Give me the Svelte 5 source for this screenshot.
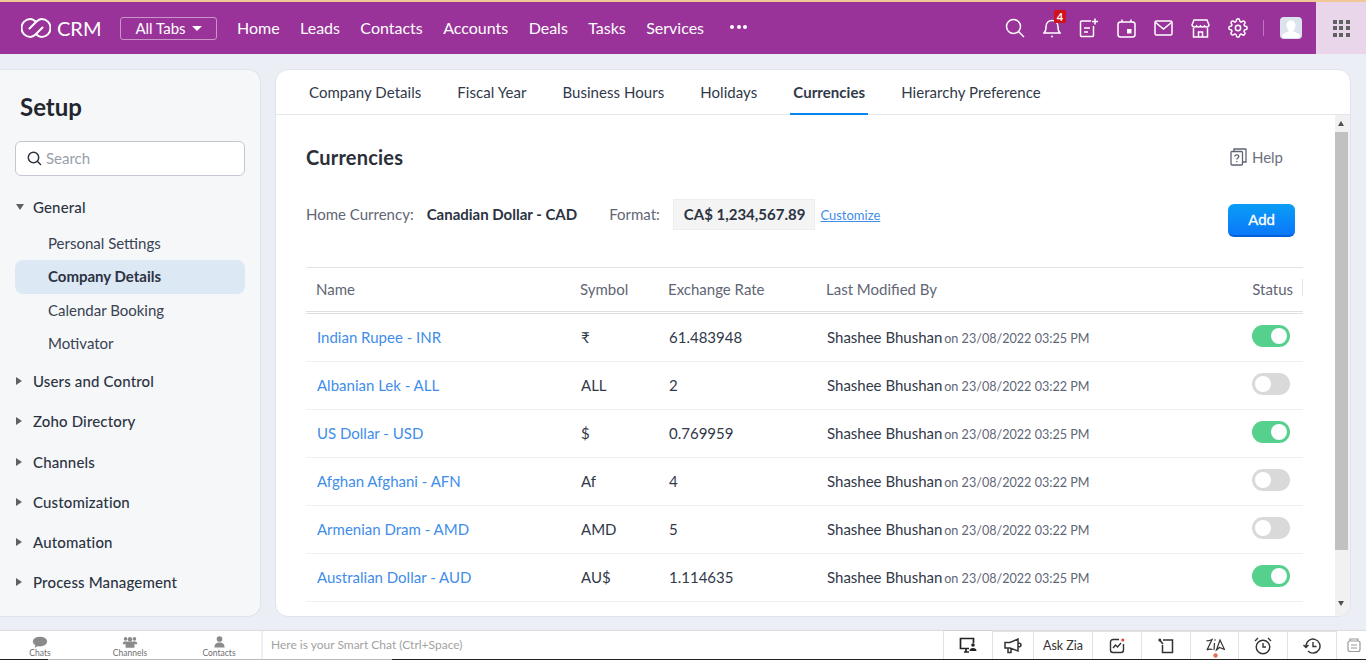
<script>
	const nav = ['Home', 'Leads', 'Contacts', 'Accounts', 'Deals', 'Tasks', 'Services'];
	const tabs = ['Company Details', 'Fiscal Year', 'Business Hours', 'Holidays', 'Currencies', 'Hierarchy Preference'];
	const groups = ['Users and Control', 'Zoho Directory', 'Channels', 'Customization', 'Automation', 'Process Management'];
	const general = ['Personal Settings', 'Company Details', 'Calendar Booking', 'Motivator'];
	const rows = [
		{ name: 'Indian Rupee - INR', symbol: '₹', rate: '61.483948', time: '03:25 PM', on: true },
		{ name: 'Albanian Lek - ALL', symbol: 'ALL', rate: '2', time: '03:22 PM', on: false },
		{ name: 'US Dollar - USD', symbol: '$', rate: '0.769959', time: '03:25 PM', on: true },
		{ name: 'Afghan Afghani - AFN', symbol: 'Af', rate: '4', time: '03:22 PM', on: false },
		{ name: 'Armenian Dram - AMD', symbol: 'AMD', rate: '5', time: '03:22 PM', on: false },
		{ name: 'Australian Dollar - AUD', symbol: 'AU$', rate: '1.114635', time: '03:25 PM', on: true }
	];
</script>

<div class="page">
	<header class="top">
		<svg class="logo" width="30" height="20" viewBox="0 0 30 20" fill="none" stroke="#fff" stroke-width="2" stroke-linecap="round">
			<path d="M14.500 3.500C13 2 11.500 1 9.500 1A9 9 0 0 0 9.500 19C12 19 13.500 17.500 15 16L21.500 9.500" />
			<path d="M15.500 16.500C17 18 18.500 19 20.500 19A9 9 0 0 0 20.500 1C18 1 16.500 2.500 15 4L8.500 10.500" />
		</svg>
		<span class="brand">CRM</span>
		<button class="alltabs">All Tabs <i class="caret"></i></button>
		<nav class="nav">
			{#each nav as item}
				<span>{item}</span>
			{/each}
			<span class="dots"><i></i><i></i><i></i></span>
		</nav>
		<div class="tools">
			<svg width="20" height="20" viewBox="0 0 20 20" fill="none" stroke="#fff" stroke-width="1.500"><circle cx="8.500" cy="8.500" r="7" /><path d="M13.500 13.500L19 19" /></svg>
			<span class="bell">
				<svg width="18" height="20" viewBox="0 0 18 20" fill="none" stroke="#fff" stroke-width="1.500"><path d="M1 15c2-1.500 2-3 2-6 0-4 2.500-6.500 6-6.500s6 2.500 6 6.500c0 3 0 4.500 2 6z" /><circle cx="9" cy="18.500" r="1" fill="#fff" stroke="none" /></svg>
				<b>4</b>
			</span>
			<svg width="20" height="20" viewBox="0 0 20 20" fill="none" stroke="#fff" stroke-width="1.500"><path d="M12 3H2.500a1 1 0 0 0-1 1v13.500a1 1 0 0 0 1 1h11a1 1 0 0 0 1-1V8" /><path d="M5 10h6M5 14h4M16 0.500v6M13 3.500h6" /></svg>
			<svg width="19" height="19" viewBox="0 0 19 19" fill="none" stroke="#fff" stroke-width="1.500"><rect x="1" y="3" width="17" height="15" rx="2.500" /><path d="M5 0.500V3M14 0.500V3" /><rect x="10" y="10" width="4.500" height="4.500" fill="#fff" stroke="none" /></svg>
			<svg width="19" height="16" viewBox="0 0 19 16" fill="none" stroke="#fff" stroke-width="1.500"><rect x="1" y="1" width="17" height="14" rx="1.500" /><path d="M1 2l8.500 7L18 2" /></svg>
			<svg width="19" height="19" viewBox="0 0 19 19" fill="none" stroke="#fff" stroke-width="1.500"><path d="M3 1h13l2 5a2.500 2.500 0 0 1-4.500 1 2.500 2.500 0 0 1-4 0 2.500 2.500 0 0 1-4 0A2.500 2.500 0 0 1 1 6z" /><path d="M2.500 9v9h14V9" /><path d="M7.500 18v-5h4v5" /></svg>
			<svg width="20" height="20" viewBox="0 0 24 24" fill="none" stroke="#fff" stroke-width="1.800"><circle cx="12" cy="12" r="3.200" /><path d="M19.400 15a1.700 1.700 0 0 0 .3 1.800l.1.100a2 2 0 1 1-2.900 2.900l-.1-.1a1.700 1.700 0 0 0-2.800 1.200V21a2 2 0 1 1-4 0v-.1a1.700 1.700 0 0 0-2.800-1.200l-.1.100a2 2 0 1 1-2.900-2.900l.1-.1a1.700 1.700 0 0 0-1.200-2.800H3a2 2 0 1 1 0-4h.1a1.700 1.700 0 0 0 1.200-2.800l-.1-.1a2 2 0 1 1 2.900-2.900l.1.100a1.700 1.700 0 0 0 2.800-1.200V3a2 2 0 1 1 4 0v.1a1.700 1.700 0 0 0 2.800 1.200l.1-.1a2 2 0 1 1 2.900 2.900l-.1.100a1.700 1.700 0 0 0 1.200 2.800h.1a2 2 0 1 1 0 4h-.1a1.700 1.700 0 0 0-1.500 1z" /></svg>
			<i class="sep"></i>
			<span class="avatar">
				<svg width="22" height="22" viewBox="0 0 22 22"><rect width="22" height="22" rx="4" fill="#dde3ec" /><path d="M11 3.500c3 0 4.500 2.300 4.500 5 0 2-1 3.800-2 4.800v1.200c2.500 1 5.500 1.500 6.500 4 0 1.500-1 2.500-2.500 2.500h-13C3 20.500 2 19.500 2 18.500c1-2.500 4-3 6.500-4v-1.200c-1-1-2-2.800-2-4.800 0-2.700 1.500-5 4.500-5z" fill="#fff" /></svg>
			</span>
		</div>
		<div class="apps">
			<div class="grid9">
				{#each Array(9) as _}<i></i>{/each}
			</div>
		</div>
	</header>

	<main class="main">
		<aside class="side">
			<h1>Setup</h1>
			<div class="search">
				<svg width="15" height="15" viewBox="0 0 15 15" fill="none" stroke="#2f3441" stroke-width="1.500"><circle cx="6.500" cy="6.500" r="5.200" /><path d="M10.300 10.300L14 14" /></svg>
				<span>Search</span>
			</div>
			<div class="group open"><i class="tri down"></i>General</div>
			<ul>
				{#each general as item}
					<li class:active={item === 'Company Details'}>{item}</li>
				{/each}
			</ul>
			{#each groups as g}
				<div class="group"><i class="tri"></i>{g}</div>
			{/each}
		</aside>

		<section class="content">
			<div class="tabs">
				{#each tabs as t}
					<span class="tab" class:current={t === 'Currencies'}>{t}</span>
				{/each}
			</div>
			<div class="body">
				<div class="pane">
					<div class="title">
						<h2>Currencies</h2>
						<span class="help">
							<svg width="17" height="18" viewBox="0 0 17 18" fill="none" stroke="#5f6472" stroke-width="1.300"><rect x="1" y="3.500" width="11.500" height="13.500" rx="1" /><path d="M4 3.500V1h11.500a.5.5 0 0 1 .5.500V14h-3.500" /><path d="M4.800 8.500c0-2.300 4-2.300 4 0 0 1.500-2 1.500-2 3M6.800 13v1.300" /></svg>
							Help
						</span>
					</div>
					<div class="home">
						<span class="lbl">Home Currency:</span>
						<b class="cad">Canadian Dollar - CAD</b>
						<span class="lbl fmt">Format:</span>
						<b class="sample">CA$ 1,234,567.89</b>
						<a href="#top" class="custom">Customize</a>
						<button class="add">Add</button>
					</div>
					<div class="table">
						<div class="row head">
							<span class="n">Name</span>
							<span>Symbol</span>
							<span>Exchange Rate</span>
							<span>Last Modified By</span>
							<span class="st">Status</span>
						</div>
						{#each rows as r}
							<div class="row">
								<span class="n link">{r.name}</span>
								<span>{r.symbol}</span>
								<span>{r.rate}</span>
								<span>Shashee Bhushan <small>on 23/08/2022 {r.time}</small></span>
								<span class="st"><i class="toggle" class:on={r.on}></i></span>
							</div>
						{/each}
					</div>
				</div>
				<div class="scroll">
					<i class="up"></i>
					<div class="thumb"></div>
					<i class="dn"></i>
				</div>
			</div>
		</section>
	</main>

	<footer class="foot">
		<div class="chatlinks">
			<span class="fl">
				<svg width="16" height="12" viewBox="0 0 18 13" fill="#8a8a8a"><ellipse cx="9" cy="6" rx="8" ry="5.500" /><path d="M4 9l-1 4 5-2.500z" /></svg>
				Chats
			</span>
			<span class="fl">
				<svg width="16" height="12" viewBox="0 0 18 13" fill="#8a8a8a"><circle cx="4" cy="3" r="2" /><circle cx="14" cy="3" r="2" /><circle cx="9" cy="3.500" r="2.500" /><path d="M1 7.500c0-1 2-1.500 3-1.500h10c1 0 3 .5 3 1.500V9H1zM4 10c0-2 2-3 5-3s5 1 5 3v3H4z" /></svg>
				Channels
			</span>
			<span class="fl">
				<svg width="13" height="12" viewBox="0 0 14 14" fill="#8a8a8a"><circle cx="7" cy="3.500" r="3.300" /><path d="M1 13.500c0-4 2-6 6-6s6 2 6 6z" /></svg>
				Contacts
			</span>
		</div>
		<div class="smart">Here is your Smart Chat (Ctrl+Space)</div>
		<div class="dock">
			<span class="cell first">
				<svg width="18" height="16" viewBox="0 0 18 16" fill="none" stroke="#222" stroke-width="1.700"><path d="M10 11.500H1.500V1.500h13V6M5 15h5M7 12v3" /><circle cx="14" cy="8" r="1.800" fill="#222" stroke="none" /><path d="M10.500 14c0-2 1.500-3 3.500-3s3.500 1 3.500 3z" fill="#222" stroke="none" /></svg>
			</span>
			<span class="cell c41">
				<svg width="18" height="16" viewBox="0 0 18 16" fill="none" stroke="#333" stroke-width="1.500"><path d="M1 4.500h5l8-3.500v12L6 10H1zM4 10v4.500h3V10M14 5c2 0 3 1 3 2s-1 2-3 2" /></svg>
			</span>
			<span class="cell zia">Ask Zia</span>
			<span class="cell">
				<svg width="16" height="16" viewBox="0 0 16 16" fill="none" stroke="#333" stroke-width="1.400"><path d="M10 1.500H4A2.500 2.500 0 0 0 1.500 4v8A2.500 2.500 0 0 0 4 14.500h8a2.500 2.500 0 0 0 2.500-2.500V6" /><path d="M4 10l2.500-3 2 2L12 5" /><circle cx="13.800" cy="2" r="1.500" fill="#e23b2e" stroke="none" /></svg>
			</span>
			<span class="cell">
				<svg width="16" height="16" viewBox="0 0 16 16" fill="none" stroke="#333" stroke-width="1.500"><path d="M5 2h9.500v12.500h-10V7" /><path d="M1.500 2L5 6" /><circle cx="1.800" cy="2" r="1.500" fill="#333" stroke="none" /></svg>
			</span>
			<span class="cell c48">
				<svg class="zlogo" width="20" height="20" viewBox="0 0 20 20" fill="none" stroke="#333" stroke-width="1.200"><path d="M1.500 2.500C3 3.500 5 2.500 7 1.500L2 12c2-1.500 4-1 5.500-.5" /><path d="M9.500 5l-.5 7" /><circle cx="10" cy="2" r=".8" fill="#333" stroke="none" /><path d="M15 2l4.500 9.500-5-2-3 2.500z" /><circle cx="10.500" cy="17.500" r="2.200" fill="#e0705a" stroke="none" /></svg>
			</span>
			<span class="cell">
				<svg width="18" height="18" viewBox="0 0 18 18" fill="none" stroke="#333" stroke-width="1.400"><circle cx="9" cy="10" r="6.800" /><path d="M9 6v4h3M1 4l3-3M17 4l-3-3" /></svg>
			</span>
			<span class="cell">
				<svg width="18" height="16" viewBox="0 0 18 16" fill="none" stroke="#333" stroke-width="1.400"><path d="M3 8a7 7 0 1 1 2 5M10 4v4.500h3.500M0.500 7L3 9.500 5.500 7" /></svg>
			</span>
			<span class="cell last">
				<svg width="14" height="14" viewBox="0 0 14 14" fill="none" stroke="#999" stroke-width="1.200"><rect x="1" y="3" width="12" height="10.500" rx="2" /><path d="M3 3V1h8v2M4 7h6M4 10h6" /></svg>
			</span>
		</div>
	</footer>
</div>

<style>
	:global(body) {
		margin: 0;
		font-family: Lato, 'Liberation Sans', sans-serif;
		color: #313949;
	}

	.page {
		width: 1366px;
		height: 660px;
		background: #ebeef4;
		display: flex;
		flex-direction: column;
		overflow: hidden;
	}

	i { display: block; }

	.top {
		height: 54px;
		box-sizing: border-box;
		flex: none;
		border-top: 2px solid #f0c896;
		background: #993399;
		display: flex;
		align-items: center;
		color: #fff;
		padding-left: 21px;
	}
	.brand { font-size: 20px; margin-left: 6px; width: 44px; margin-right: 19px; }
	.alltabs {
		width: 97px;
		height: 23px;
		border: 1px solid #c995c9;
		border-radius: 3px;
		background: transparent;
		color: #fff;
		font: 15px Lato, sans-serif;
		display: flex;
		align-items: center;
		justify-content: center;
		gap: 6px;
		padding: 0;
	}
	.caret {
		border: 5.500px solid transparent;
		border-top-color: #fff;
		border-bottom: 0;
	}
	.nav {
		display: flex;
		align-items: center;
		gap: 20.400px;
		margin-left: 20px;
		margin-bottom: 2px;
		font-size: 16px;
	}
	.dots { display: flex; gap: 2.500px; margin-left: 6px; }
	.dots i { width: 4px; height: 4px; border-radius: 50%; background: #fff; }

	.tools {
		margin-left: auto;
		display: flex;
		align-items: center;
		gap: 18px;
		margin-right: 14px;
	}
	.bell { position: relative; display: flex; }
	.bell b {
		position: absolute;
		top: -8px;
		right: -5px;
		width: 12px;
		height: 13px;
		background: #d0121b;
		font-size: 11px;
		line-height: 13px;
		text-align: center;
		border-radius: 1px;
	}
	.sep { width: 1px; height: 16px; background: #b879b8; margin: 0 -2px 0 -3px; }
	.avatar { display: flex; }
	.apps {
		width: 50px;
		height: 52px;
		background: #ead6ea;
		display: flex;
		align-items: center;
		justify-content: center;
	}
	.grid9 { display: grid; grid-template-columns: repeat(3, 4px); gap: 2.500px; }
	.grid9 i { height: 4px; background: #616161; }

	.main {
		flex: 1;
		display: flex;
		gap: 14px;
		padding: 15px 15px 13px 0;
		min-height: 0;
	}

	.side {
		width: 261px;
		flex: none;
		box-sizing: border-box;
		background: #f5f7f9;
		border: 1px solid #dfe3ec;
		border-left: 0;
		border-radius: 0 13px 13px 0;
		padding: 0 15px;
		overflow: hidden;
	}
	.side h1 {
		font-size: 24px;
		font-weight: 700;
		color: #22262f;
		margin: 21px 0 18px 5px;
		line-height: 32px;
	}
	.search {
		height: 35px;
		box-sizing: border-box;
		background: #fff;
		border: 1px solid #c2c7d1;
		border-radius: 6px;
		display: flex;
		align-items: center;
		gap: 4px;
		padding-left: 11px;
		font-size: 15px;
		color: #98a0ac;
	}
	.search span { margin-top: -1px; }
	.group {
		display: flex;
		align-items: center;
		font-size: 15px;
		font-weight: 500;
		letter-spacing: 0.15px;
		color: #2c3342;
		height: 40.200px;
		padding-left: 1px;
	}
	.group.open { margin-top: 11px; height: 40px; }
	.tri {
		width: 0;
		height: 0;
		border: 4px solid transparent;
		border-left: 6px solid #616161;
		border-right: 0;
		margin-right: 11px;
	}
	.tri.down {
		border: 4.500px solid transparent;
		border-top: 6px solid #616161;
		border-bottom: 0;
		margin-right: 9px;
	}
	.side ul { list-style: none; margin: 0 0 1px; padding: 0; }
	.side li {
		height: 33.300px;
		line-height: 33px;
		font-size: 15px;
		padding-left: 33px;
		color: #3a4252;
		border-radius: 8px;
	}
	.side li.active { background: #dde8f5; font-weight: 700; color: #2c3342; }

	.content {
		width: 1076px;
		flex: none;
		box-sizing: border-box;
		background: #fff;
		border: 1px solid #dfe3ec;
		border-radius: 13px;
		display: flex;
		flex-direction: column;
		overflow: hidden;
	}
	.tabs {
		height: 45px;
		flex: none;
		box-sizing: border-box;
		border-bottom: 1px solid #e3e6ed;
		display: flex;
		padding-left: 33px;
		gap: 36px;
	}
	.tab {
		font-size: 15px;
		letter-spacing: 0.05px;
		line-height: 45px;
		color: #313949;
		position: relative;
	}
	.tab.current { font-weight: 700; }
	.tab.current::after {
		content: '';
		position: absolute;
		left: -3px;
		right: -3px;
		bottom: -1px;
		height: 2px;
		background: #0a84f0;
	}

	.body { flex: 1; display: flex; min-height: 0; }
	.pane { flex: 1; padding: 0 32px 0 30px; min-width: 0; }
	.title {
		display: flex;
		justify-content: space-between;
		align-items: center;
		height: 84px;
		padding-right: 20px;
	}
	.title h2 { font-size: 20px; font-weight: 700; letter-spacing: 0.2px; color: #2b2f38; margin: 0; }
	.help { font-size: 15px; color: #6b7180; display: flex; align-items: center; gap: 5px; }

	.home {
		display: flex;
		align-items: flex-start;
		font-size: 15px;
		line-height: 31px;
		height: 68px;
	}
	.lbl { color: #5f6675; }
	.cad { margin-left: 13px; color: #2c3342; font-weight: 700; }
	.fmt { margin-left: 32px; }
	.sample {
		margin-left: 13px;
		height: 31px;
		line-height: 29px;
		padding: 0 9px 0 10px;
		background: #f4f4f4;
		border: 1px solid #eee;
		box-sizing: border-box;
		color: #2c3342;
		font-weight: 700;
	}
	.custom { margin-left: 5px; margin-top: 1px; font-size: 13px; color: #408dea; }
	.add {
		margin-left: auto;
		margin-right: 8px;
		margin-top: 5px;
		width: 67px;
		height: 33px;
		border: 0;
		border-bottom: 2px solid #0060d8;
		border-radius: 6px;
		background: linear-gradient(#0a9df5, #0a78fa);
		color: #fff;
		font: 400 15px 'Liberation Sans', Arial, sans-serif;
		-webkit-text-stroke: 0.3px #fff;
		padding: 0;
	}

	.table { border-top: 1px solid #e3e3e3; }
	.row {
		display: grid;
		grid-template-columns: 274px 88px 158px 1fr 72px;
		height: 48px;
		padding-bottom: 2px;
		box-sizing: border-box;
		align-items: center;
		border-bottom: 1px solid #f0f0f0;
		font-size: 15px;
		color: #313949;
	}
	.row.head {
		height: 46px;
		padding-bottom: 2px;
		color: #5f6675;
		border-bottom: 3px double #dfdfdf;
	}
	.n { padding-left: 11px; }
	.head .n { padding-left: 10px; }
	.row > span:nth-child(n+2):nth-child(-n+4) { padding-left: 1px; }
	.head > span:nth-child(n+2):nth-child(-n+4) { padding-left: 0; }
	.link { color: #408dea; }
	.st { display: flex; justify-content: flex-end; padding-right: 13px; position: relative; }
	.head .st { padding-right: 10px; }
	.head .st::after {
		content: '';
		position: absolute;
		right: 0;
		top: -1px;
		width: 1px;
		height: 17px;
		background: #dfe3ec;
	}
	.row small { font-size: 12.600px; color: #5f6675; margin-left: -2px; }
	.toggle {
		width: 38px;
		height: 22px;
		margin-top: -1px;
		border-radius: 11px;
		background: #d9d9d9;
		position: relative;
	}
	.toggle::after {
		content: '';
		position: absolute;
		top: 3px;
		left: 3px;
		width: 16px;
		height: 16px;
		border-radius: 50%;
		background: #fff;
	}
	.toggle.on { background: #55d08d; }
	.toggle.on::after { left: 19px; }

	.scroll {
		width: 15px;
		flex: none;
		background: #f1f1f1;
		display: flex;
		flex-direction: column;
		align-items: flex-start;
		padding-right: 2px;
		box-sizing: border-box;
	}
	.thumb { width: 13px; height: 418px; background: #c1c1c1; }
	.up, .dn { width: 0; height: 0; border: 3.500px solid transparent; margin: 0 3px; }
	.up { border-bottom: 5px solid #505050; border-top: 0; margin-top: 6px; margin-bottom: 6px; }
	.dn { border-top: 5px solid #505050; border-bottom: 0; margin-top: 51px; }

	.foot {
		height: 30px;
		flex: none;
		box-sizing: border-box;
		background: #fff linear-gradient(90deg, #222 48px, #bbb 48px, #bbb 392px, #222 392px) left bottom / 100% 1px no-repeat;
		border-top: 1px solid #dcdcdc;
		padding-bottom: 1px;
		display: flex;
	}
	.chatlinks {
		width: 263px;
		flex: none;
		display: grid;
		grid-template-columns: 80px 100px 78px;
		box-sizing: border-box;
		border-right: 2px solid #efefef;
	}
	.fl {
		display: flex;
		flex-direction: column;
		align-items: center;
		font-size: 8.500px;
		line-height: 9px;
		color: #6f6f6f;
		padding-top: 5px;
		box-sizing: border-box;
	}
	.fl svg { margin-bottom: 1px; }
	.smart { flex: 1; font-size: 12px; color: #a2a2a2; line-height: 27px; padding-left: 8px; }
	.dock { display: flex; }
	.cell {
		width: 49px;
		display: flex;
		align-items: center;
		justify-content: center;
		box-sizing: border-box;
		border-left: 1px solid #e2e2e2;
		border-top: 1px solid #e2e2e2;
	}
	.cell.c41 { width: 41px; }
	.cell.c48 { width: 48px; }
	.cell.first { border-right: 1px solid #e2e2e2; margin-right: -1px; border-top-color: #cfcfcf; margin-top: -1px; width: 50px; }
	.zia { width: 59px; font-size: 12.500px; color: #333; }
	.cell.last { width: 30px; padding-left: 4px; border-top: 0; }
	.zlogo { margin-top: 4px; }
</style>
